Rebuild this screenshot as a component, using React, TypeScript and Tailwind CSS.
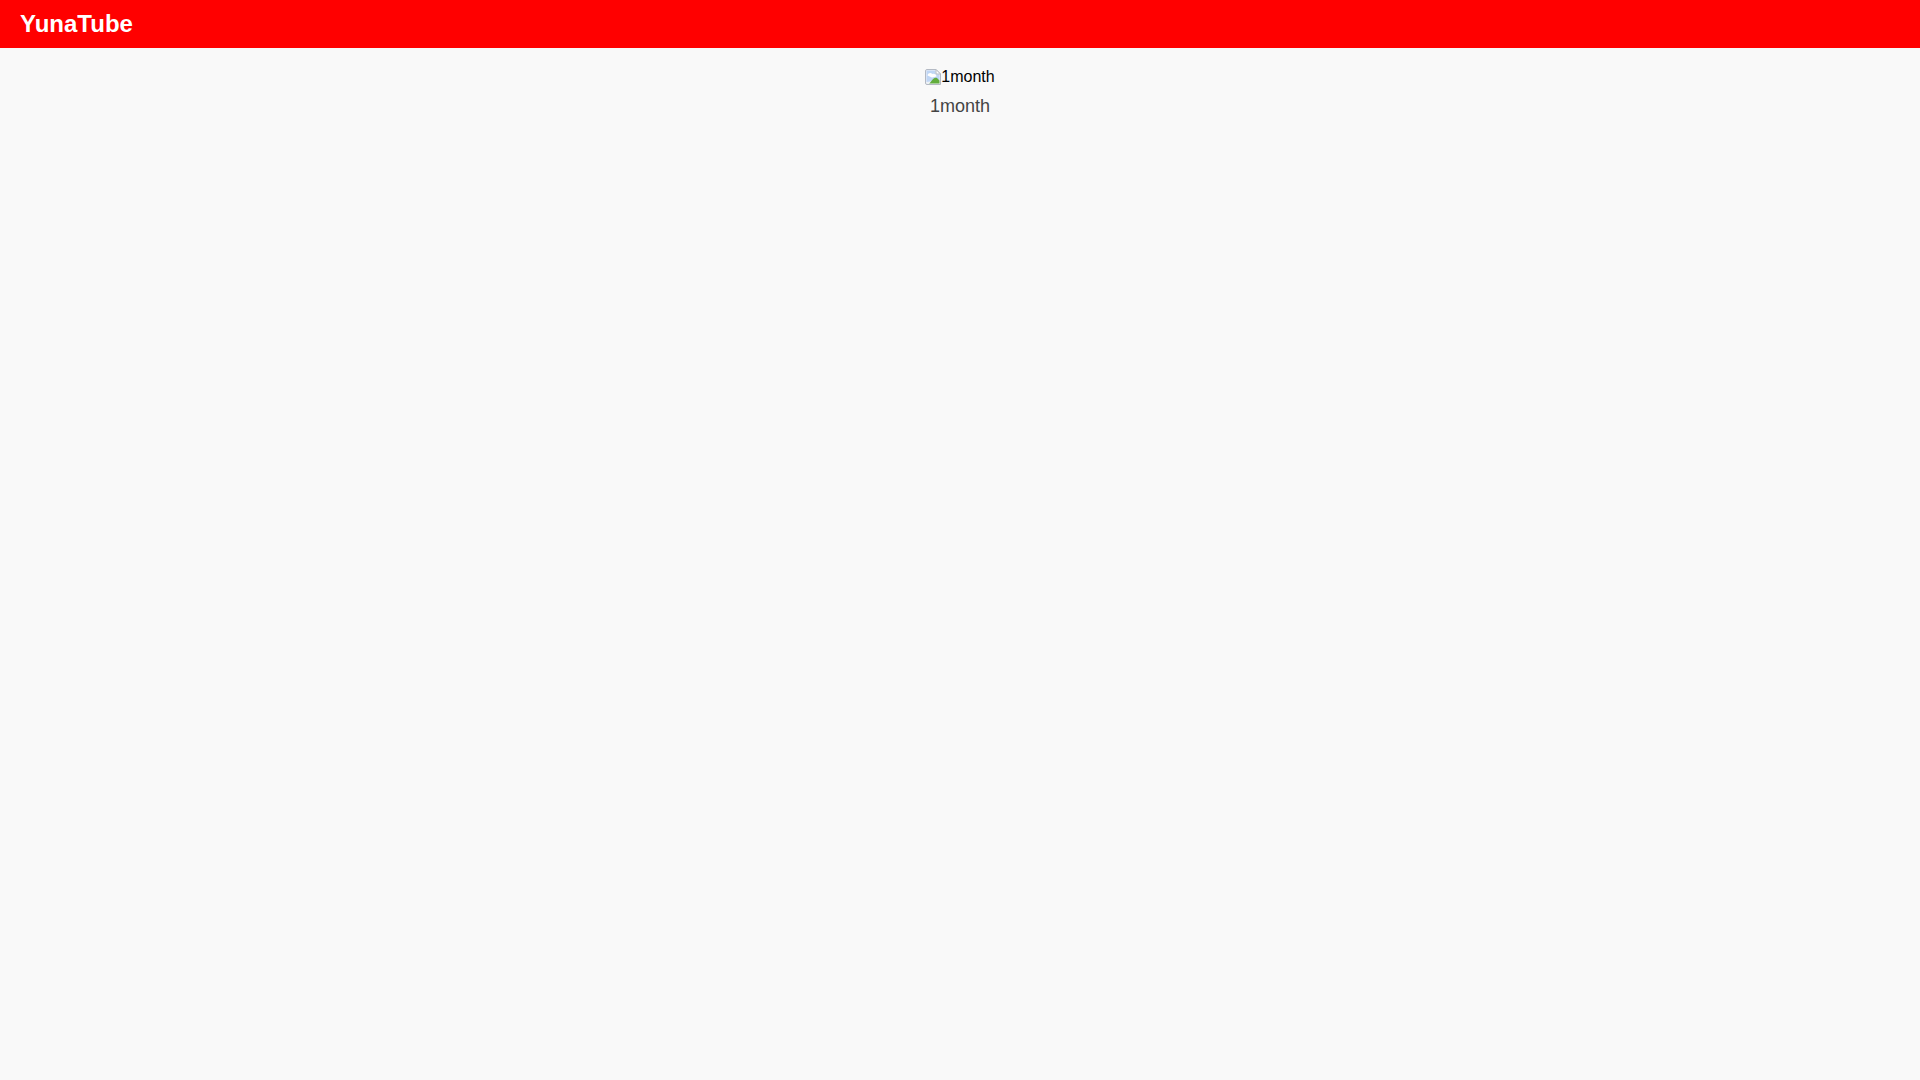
export default function App() {
  return (
    <div className="min-h-screen bg-[#f9f9f9] font-['Liberation_Sans',Arial,sans-serif]">
      <header className="h-12 bg-[#ff0000] px-5 flex items-center">
        <h1 className="text-2xl font-bold text-white">YunaTube</h1>
      </header>
      <main className="flex justify-center pt-5">
        <div className="flex flex-col items-center">
          <div className="flex items-center text-base leading-[18px] text-black">
            <svg width="16" height="16" viewBox="0 0 16 16" className="shrink-0">
              <path d="M2 0.5H11L15.5 5V15.5H2Q0.5 15.5 0.5 14V2Q0.5 0.5 2 0.5Z" fill="#eef1f6" stroke="#b4bac4" />
              <path d="M1.5 1.5H10.5V5.5H14.5V11L1.5 13Z" fill="#bfd6f5" />
              <path d="M2.5 6.5C3 4 6 3.4 7.2 5 9 4.2 11.5 5.4 11.5 7.5L7 8.5Z" fill="#ffffff" />
              <path d="M4 15L6 12.5C8 9.5 10 8 12 9L14.5 11.5V14.5H4Z" fill="#62ad3c" />
              <path d="M11 0.5L15.5 5H11Z" fill="#ffffff" stroke="#b4bac4" />
            </svg>
            <span>1month</span>
          </div>
          <p className="mt-[9px] text-lg leading-[22px] text-[#444444]">1month</p>
        </div>
      </main>
    </div>
  );
}
